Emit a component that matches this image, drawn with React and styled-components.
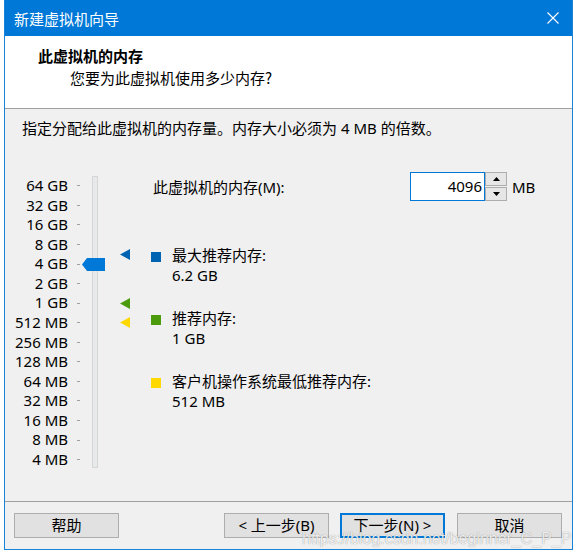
import React from 'react';
import styled, { createGlobalStyle } from 'styled-components';

const GlobalStyle = createGlobalStyle`
  html, body {
    margin: 0;
    padding: 0;
    background: #ffffff;
  }
  body {
    font-family: "Noto Sans", "Noto Sans CJK SC", sans-serif;
    font-size: 15px;
    color: #000;
  }
`;

const Window = styled.div`
  position: relative;
  box-sizing: border-box;
  margin-left: 4px;
  width: 569px;
  height: 550px;
  display: flex;
  flex-direction: column;
  border: 1px solid #1883d7;
  border-top: none;
  background: #f0f0f0;
`;

const TitleBar = styled.div`
  height: 36px;
  flex: none;
  display: flex;
  align-items: center;
  justify-content: space-between;
  padding: 0 13px 0 9px;
  background: #0078d7;
  color: #fff;
  font-family: "Noto Sans CJK SC", sans-serif;
  font-size: 15px;
`;

const Header = styled.div`
  height: 72px;
  flex: none;
  box-sizing: content-box;
  background: #fff;
  border-bottom: 1px solid #a0a0a0;
  padding-left: 33px;
  font-family: "Noto Sans CJK SC", sans-serif;
`;

const HeaderTitle = styled.div`
  margin-top: 10px;
  font-size: 15px;
  line-height: 20px;
  font-weight: 700;
`;

const HeaderSub = styled.div`
  margin: 2px 0 0 32px;
  font-size: 15px;
  line-height: 20px;
`;

const Body = styled.div`
  flex: 1;
  display: flex;
  flex-direction: column;
`;

const Intro = styled.div`
  padding: 9px 0 0 17px;
  line-height: 20px;
`;

const Main = styled.div`
  display: flex;
  align-items: flex-start;
  padding-top: 34px;
`;

const Slider = styled.div`
  position: relative;
  display: flex;
  margin-top: 4px;
`;

const Scale = styled.div`
  display: flex;
  flex-direction: column;
`;

const ScaleRow = styled.div`
  height: 19.57px;
  display: flex;
  align-items: center;
  line-height: 19.57px;
`;

const ScaleLabel = styled.span`
  width: 63px;
  text-align: right;
  white-space: nowrap;
`;

const Tick = styled.span`
  width: 3px;
  height: 1px;
  margin-left: 9px;
  background: #a0a0a0;
`;

const Track = styled.div`
  box-sizing: border-box;
  width: 6px;
  height: 292px;
  margin-left: 12px;
  border: 1px solid #d6d6d6;
  background: #e7eaea;
`;

const MarkerColumn = styled.div`
  position: relative;
  width: 10px;
  height: 292px;
  margin-left: 22px;
`;

const Thumb = styled.svg`
  position: absolute;
  left: 77px;
  width: 23px;
  height: 13px;
`;

const Marker = styled.svg`
  position: absolute;
  left: 0;
  width: 10px;
  height: 11px;
`;

const Settings = styled.div`
  margin-left: 21px;
  display: flex;
  flex-direction: column;
`;

const MemoryRow = styled.div`
  display: flex;
  align-items: center;
  height: 29px;
`;

const MemoryLabel = styled.span`
  width: 259px;
  padding-left: 2px;
  box-sizing: border-box;
`;

const NumberBox = styled.div`
  box-sizing: border-box;
  width: 75px;
  height: 29px;
  border: 1px solid #0078d7;
  background: #fff;
  text-align: right;
  padding-right: 2px;
  line-height: 27px;
`;

const Spinner = styled.div`
  display: flex;
  flex-direction: column;
  gap: 1px;
  width: 22px;
  height: 29px;
`;

const SpinButton = styled.div`
  box-sizing: border-box;
  flex: 1;
  display: flex;
  align-items: center;
  justify-content: center;
  border: 1px solid #adadad;
  background: #e6e6e6;
`;

const Unit = styled.span`
  margin-left: 5px;
`;

const Legend = styled.div`
  margin-top: 45px;
  display: flex;
  flex-direction: column;
  gap: 24px;
`;

const LegendItem = styled.div`
  display: flex;
  align-items: flex-start;
`;

const Swatch = styled.span`
  width: 10px;
  height: 10px;
  margin-top: 6px;
  margin-right: 11px;
  flex: none;
  background: ${(p) => p.$color};
`;

const LegendText = styled.div`
  line-height: 19.5px;
`;

const Footer = styled.div`
  height: 47px;
  flex: none;
  box-sizing: content-box;
  border-top: 1px solid #a0a0a0;
  display: flex;
  align-items: flex-start;
  padding: 0 10px 0 9px;
`;

const Button = styled.button`
  box-sizing: border-box;
  width: 105px;
  height: 25px;
  margin-top: 11px;
  padding: 0;
  font-family: "Noto Sans", "Noto Sans CJK SC", sans-serif;
  font-size: 15px;
  line-height: 21px;
  color: #000;
  background: #e1e1e1;
  border: ${(p) => (p.$primary ? '2px solid #0078d7' : '1px solid #adadad')};
  margin-left: ${(p) => p.$gap || '0'};
`;

const Watermark = styled.div`
  position: absolute;
  left: 297px;
  top: 530px;
  font-family: "Liberation Sans", sans-serif;
  font-size: 16px;
  color: rgba(255, 255, 255, 0.85);
  text-shadow: 0 0 1px rgba(0, 0, 0, 0.45);
  pointer-events: none;
  white-space: nowrap;
`;

const STEP = 19.57;
const scale = [
  '64 GB', '32 GB', '16 GB', '8 GB', '4 GB', '2 GB', '1 GB', '512 MB',
  '256 MB', '128 MB', '64 MB', '32 MB', '16 MB', '8 MB', '4 MB',
];

// MB -> y centre on the scale (log2)
const yFor = (mb) => (Math.log2(65536 / mb) + 0.5) * STEP;

const markers = [
  { mb: 6.2 * 1024 * 0.9, color: '#0063b1' },
  { mb: 1024, color: '#4c9b0c' },
  { mb: 512, color: '#ffd800' },
];

const legend = [
  { color: '#0063b1', title: '最大推荐内存:', value: '6.2 GB' },
  { color: '#4c9b0c', title: '推荐内存:', value: '1 GB' },
  { color: '#ffd800', title: '客户机操作系统最低推荐内存:', value: '512 MB' },
];

function CloseIcon() {
  return (
    <svg width="12" height="12" viewBox="0 0 12 12">
      <path d="M0.5 0.5 L11.5 11.5 M11.5 0.5 L0.5 11.5" stroke="#fff" strokeWidth="1.1" />
    </svg>
  );
}

export default function App() {
  return (
    <>
      <GlobalStyle />
      <Window>
        <TitleBar>
          <span>新建虚拟机向导</span>
          <CloseIcon />
        </TitleBar>
        <Header>
          <HeaderTitle>此虚拟机的内存</HeaderTitle>
          <HeaderSub>您要为此虚拟机使用多少内存?</HeaderSub>
        </Header>
        <Body>
          <Intro>指定分配给此虚拟机的内存量。内存大小必须为 4 MB 的倍数。</Intro>
          <Main>
            <Slider>
              <Scale>
                {scale.map((s) => (
                  <ScaleRow key={s}>
                    <ScaleLabel>{s}</ScaleLabel>
                    <Tick />
                  </ScaleRow>
                ))}
              </Scale>
              <Track />
              <Thumb viewBox="0 0 23 13" style={{ top: yFor(4096) - 6.5 }}>
                <polygon points="0,6.5 5,0 23,0 23,13 5,13" fill="#0078d7" />
              </Thumb>
              <MarkerColumn>
                {markers.map((m) => (
                  <Marker key={m.color} viewBox="0 0 10 11" style={{ top: yFor(m.mb) - 5.5 }}>
                    <polygon points="0,5.5 10,0 10,11" fill={m.color} />
                  </Marker>
                ))}
              </MarkerColumn>
            </Slider>
            <Settings>
              <MemoryRow>
                <MemoryLabel>此虚拟机的内存(M):</MemoryLabel>
                <NumberBox>4096</NumberBox>
                <Spinner>
                  <SpinButton>
                    <svg width="7" height="4" viewBox="0 0 7 4"><polygon points="3.5,0 7,4 0,4" fill="#000" /></svg>
                  </SpinButton>
                  <SpinButton>
                    <svg width="7" height="4" viewBox="0 0 7 4"><polygon points="0,0 7,0 3.5,4" fill="#000" /></svg>
                  </SpinButton>
                </Spinner>
                <Unit>MB</Unit>
              </MemoryRow>
              <Legend>
                {legend.map((l) => (
                  <LegendItem key={l.title}>
                    <Swatch $color={l.color} />
                    <LegendText>
                      <div>{l.title}</div>
                      <div>{l.value}</div>
                    </LegendText>
                  </LegendItem>
                ))}
              </Legend>
            </Settings>
          </Main>
        </Body>
        <Footer>
          <Button>帮助</Button>
          <Button $gap="auto">&lt; 上一步(B)</Button>
          <Button $primary $gap="11px">下一步(N) &gt;</Button>
          <Button $gap="12px">取消</Button>
        </Footer>
        <Watermark>https://blog.csdn.net/beginner_C_P_P</Watermark>
      </Window>
    </>
  );
}
